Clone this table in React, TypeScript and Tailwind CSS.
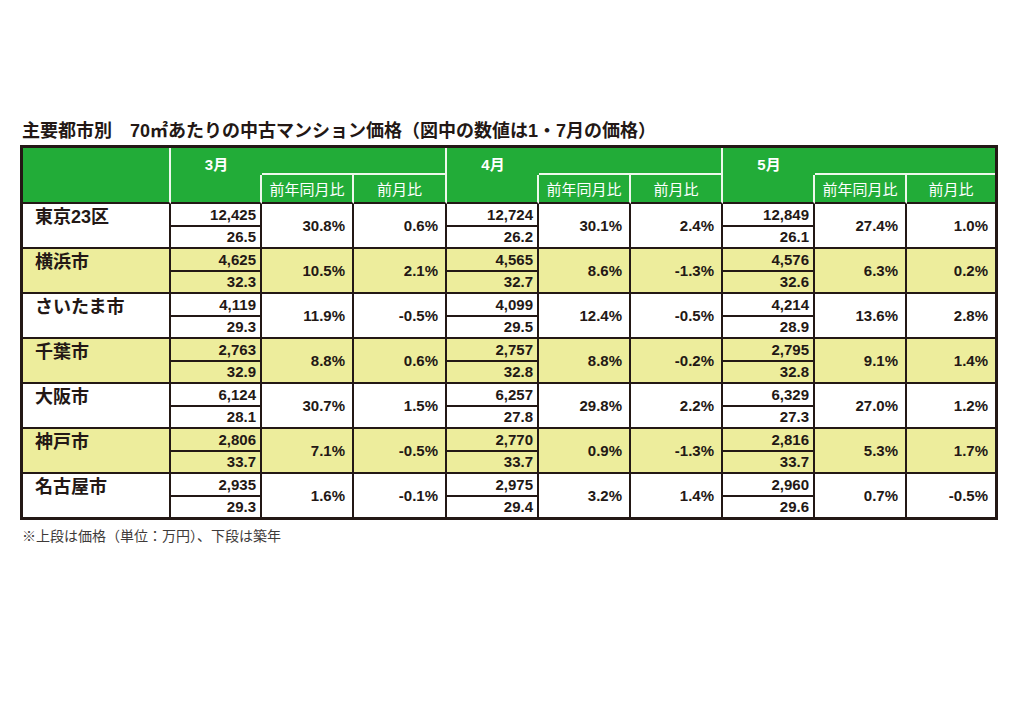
import { Fragment } from "react";
import clsx from "clsx";

const MONTHS = ["3月", "4月", "5月"];

// [price, age, yoy, mom] for 3月, 4月, 5月
type Stats = [string, string, string, string];

const CITIES: { name: string; values: Stats[] }[] = [
  { name: "東京23区", values: [["12,425", "26.5", "30.8%", "0.6%"], ["12,724", "26.2", "30.1%", "2.4%"], ["12,849", "26.1", "27.4%", "1.0%"]] },
  { name: "横浜市", values: [["4,625", "32.3", "10.5%", "2.1%"], ["4,565", "32.7", "8.6%", "-1.3%"], ["4,576", "32.6", "6.3%", "0.2%"]] },
  { name: "さいたま市", values: [["4,119", "29.3", "11.9%", "-0.5%"], ["4,099", "29.5", "12.4%", "-0.5%"], ["4,214", "28.9", "13.6%", "2.8%"]] },
  { name: "千葉市", values: [["2,763", "32.9", "8.8%", "0.6%"], ["2,757", "32.8", "8.8%", "-0.2%"], ["2,795", "32.8", "9.1%", "1.4%"]] },
  { name: "大阪市", values: [["6,124", "28.1", "30.7%", "1.5%"], ["6,257", "27.8", "29.8%", "2.2%"], ["6,329", "27.3", "27.0%", "1.2%"]] },
  { name: "神戸市", values: [["2,806", "33.7", "7.1%", "-0.5%"], ["2,770", "33.7", "0.9%", "-1.3%"], ["2,816", "33.7", "5.3%", "1.7%"]] },
  { name: "名古屋市", values: [["2,935", "29.3", "1.6%", "-0.1%"], ["2,975", "29.4", "3.2%", "1.4%"], ["2,960", "29.6", "0.7%", "-0.5%"]] },
];

const COL_WIDTHS = ["w-[148px]", "w-[91px]", "w-[92px]", "w-[93px]", "w-[92px]", "w-[92px]", "w-[92px]", "w-[92px]", "w-[92px]", "w-[88px]"];

export default function App() {
  return (
    <div className="min-h-[724px] w-[1024px] bg-white pl-[20px] pt-[119px] font-['Liberation_Sans','Noto_Sans_CJK_JP',sans-serif] text-[#231815]">
      <h1 className="pl-[2px] text-[18px] font-bold leading-[24px]">
        主要都市別　70㎡あたりの中古マンション価格（図中の数値は1・7月の価格）
      </h1>

      <table className="mt-[2px] w-[978px] table-fixed border-separate border-spacing-0 border-[3px] border-[#231815]">
        <colgroup>
          {COL_WIDTHS.map((w, i) => (
            <col key={i} className={w} />
          ))}
        </colgroup>
        <thead>
          <tr className="h-[27px]">
            <th rowSpan={2} className="border-r-2 border-b-2 border-r-[#eef8ec] border-b-[#231815] bg-[#22ac38]" />
            {MONTHS.map((m, gi) => (
              <Fragment key={m}>
                <th className="bg-[#22ac38] pt-[9px] text-center align-top text-[15px] font-bold leading-[15px] text-white">{m}</th>
                <th
                  colSpan={2}
                  className={clsx("border-b-2 border-b-[#eef8ec] bg-[#22ac38]", gi < 2 && "border-r-2 border-r-[#eef8ec]")}
                />
              </Fragment>
            ))}
          </tr>
          <tr className="h-[29px]">
            {MONTHS.map((m, gi) => (
              <Fragment key={m}>
                <th className="border-r-2 border-b-2 border-r-[#eef8ec] border-b-[#231815] bg-[#22ac38]" />
                <th className="border-r-2 border-b-2 border-r-[#eef8ec] border-b-[#231815] bg-[#22ac38] pt-[2px] text-center text-[15px] font-normal leading-[20px] text-white">
                  前年同月比
                </th>
                <th
                  className={clsx(
                    "border-b-2 border-r-[#eef8ec] border-b-[#231815] bg-[#22ac38] pt-[2px] text-center text-[15px] font-normal leading-[20px] text-white",
                    gi < 2 && "border-r-2",
                  )}
                >
                  前月比
                </th>
              </Fragment>
            ))}
          </tr>
        </thead>
        <tbody>
          {CITIES.map((city, ci) => {
            const last = ci === CITIES.length - 1;
            const bg = ci % 2 === 1 ? "bg-[#eded9c]" : "bg-white";
            return (
              <Fragment key={city.name}>
                <tr className="h-[23px]">
                  <td
                    rowSpan={2}
                    className={clsx(
                      "border-r-2 border-[#231815] pt-[3px] pl-[12px] align-top text-[18px] font-bold leading-[21px]",
                      !last && "border-b-2",
                      bg,
                    )}
                  >
                    {city.name}
                  </td>
                  {city.values.map(([price, , yoy, mom], gi) => (
                    <Fragment key={gi}>
                      <td className={clsx("border-r-2 border-b-2 border-[#231815] pr-[4px] text-right text-[15px] font-bold leading-[21px]", bg)}>
                        {price}
                      </td>
                      <td
                        rowSpan={2}
                        className={clsx(
                          "border-r-2 border-[#231815] pr-[7px] text-right align-middle text-[15px] font-bold leading-[20px]",
                          !last && "border-b-2",
                          bg,
                        )}
                      >
                        {yoy}
                      </td>
                      <td
                        rowSpan={2}
                        className={clsx(
                          "border-[#231815] pr-[7px] text-right align-middle text-[15px] font-bold leading-[20px]",
                          gi < 2 && "border-r-2",
                          !last && "border-b-2",
                          bg,
                        )}
                      >
                        {mom}
                      </td>
                    </Fragment>
                  ))}
                </tr>
                <tr className={last ? "h-[20px]" : "h-[22px]"}>
                  {city.values.map(([, age], gi) => (
                    <td
                      key={gi}
                      className={clsx(
                        "border-r-2 border-[#231815] pr-[4px] text-right text-[15px] font-bold leading-[20px]",
                        !last && "border-b-2",
                        bg,
                      )}
                    >
                      {age}
                    </td>
                  ))}
                </tr>
              </Fragment>
            );
          })}
        </tbody>
      </table>

      <p className="mt-[6px] pl-[2px] text-[14px] leading-[20px] text-[#3e3a39]">※上段は価格（単位：万円）、下段は築年</p>
    </div>
  );
}
